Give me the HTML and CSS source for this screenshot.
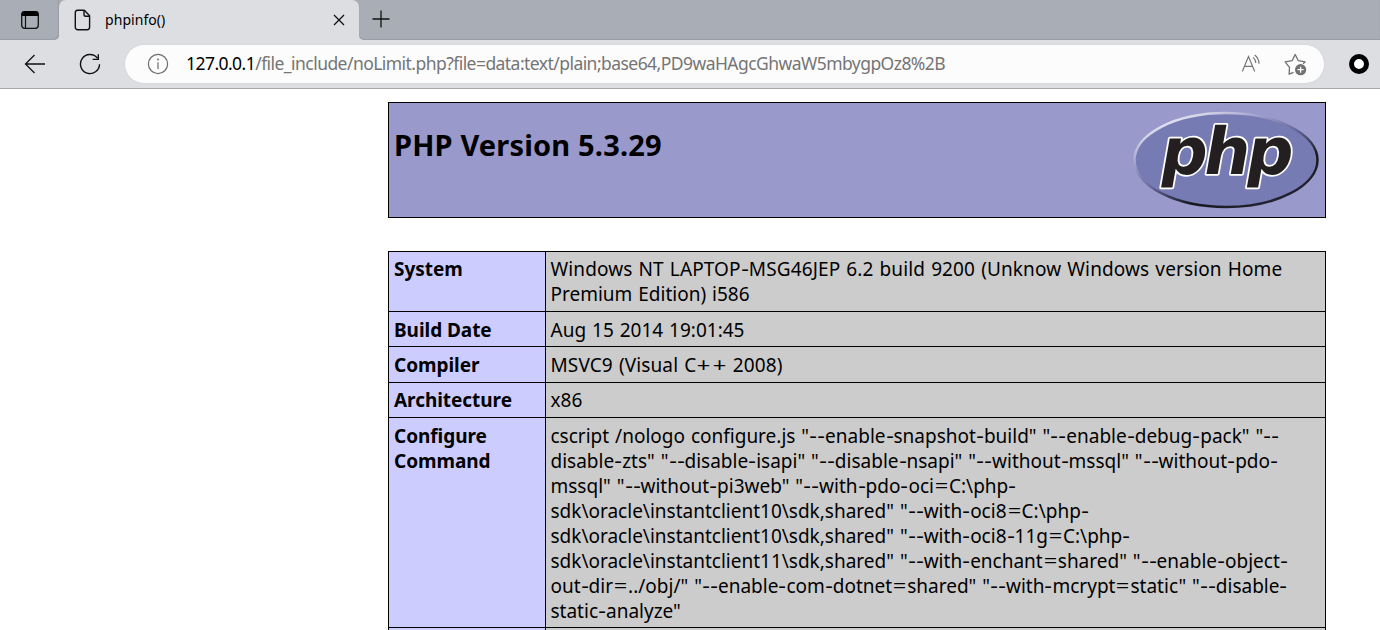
FILE: index.html
```html
<!DOCTYPE html>
<html lang="en">
<head>
<meta charset="utf-8">
<title>phpinfo()</title>
<link rel="stylesheet" href="styles.css">
</head>
<body>
<header class="browser">
  <div class="tabstrip">
    <div class="workspace">
      <svg width="20" height="20" viewBox="0 0 20 20"><rect x="1.7" y="1.7" width="16.6" height="16.6" rx="3" fill="none" stroke="#111" stroke-width="1.3"/><path d="M1.5 6V4a3 3 0 0 1 3-3h11a3 3 0 0 1 3 3v2z" fill="#000"/><path d="M5.5 6v12" stroke="#111" stroke-width="1.2"/></svg>
    </div>
    <div class="tab">
      <svg class="page-icon" width="18" height="22" viewBox="0 0 18 22" fill="none" stroke="#111" stroke-width="1.4" stroke-linejoin="round"><path d="M3.5 1.2h6.800l5.300 5.600v11.500a2.400 2.400 0 0 1-2.400 2.400H3.700a2.400 2.400 0 0 1-2.400-2.400V3.600a2.400 2.400 0 0 1 2.200-2.400z"/><path d="M10 1.400v4a1.800 1.800 0 0 0 1.800 1.800h3.600"/></svg>
      <span class="tab-title">phpinfo()</span>
      <svg class="close" width="12" height="12" viewBox="0 0 12 12" stroke="#111" stroke-width="1.3"><path d="M1 1l10 10M11 1L1 11"/></svg>
    </div>
    <div class="tail">
      <svg width="18" height="18" viewBox="0 0 18 18" stroke="#111" stroke-width="1.3"><path d="M9 .5v17M.5 9h17"/></svg>
    </div>
  </div>
  <div class="toolbar">
    <svg class="back" width="22" height="20" viewBox="0 0 22 20" fill="none" stroke="#111" stroke-width="1.3"><path d="M21 10H1.5M10.5 1L1.500 10l9 9"/></svg>
    <svg class="reload" width="22" height="22" viewBox="0 0 22 22" fill="none" stroke="#111" stroke-width="1.4"><path d="M20.500 11.200A9.500 9.500 0 1 1 18.400 5.100M19.300 1.200v5.200h-5.600"/></svg>
    <div class="address">
      <svg class="info" width="22" height="22" viewBox="0 0 22 22" fill="none" stroke="#6c6c6c" stroke-width="1.2"><circle cx="11" cy="11" r="9.600"/><path d="M11 9.300v6.700"/><circle cx="11" cy="6.600" r="1" fill="#6c6c6c" stroke="none"/></svg>
      <span class="url"><span class="host">127.0.0.1</span>/file_include/noLimit.php?file=data:text/plain;base64,PD9waHAgcGhwaW5mbygpOz8%2B</span>
      <svg class="read" width="22" height="20" viewBox="0 0 22 20" fill="none" stroke="#777" stroke-width="1.2"><path d="M1.300 17.500L7.500 2.500l6.200 15M3.400 12.400h8.200M12 3.400q2.700 2.200 2.800 5.600M13.700 1.100q4.200 3.200 4.300 8.600"/></svg>
      <svg class="star" width="23" height="23" viewBox="0 0 23 23"><path d="M9.500 19.300L5.100 21.200 5.500 14.300 1.100 8.900 8.100 7.700 11.200 1.500 14.300 7.700 21.100 8.900 19 10.700" fill="none" stroke="#707070" stroke-width="1.300" stroke-linejoin="round"/><circle cx="16.600" cy="16.700" r="5.600" fill="#707070"/><path d="M16.600 13.700v6M13.600 16.700h6" stroke="#fff" stroke-width="1.300"/></svg>
    </div>
    <div class="extension"></div>
  </div>
</header>
<main class="page">
  <section class="banner">
    <h1>PHP Version 5.3.29</h1>
    <svg class="logo" width="188" height="100" viewBox="0 0 188 100">
      <defs>
        <linearGradient id="rim" x1="0.2" y1="0" x2="0.85" y2="0.85"><stop offset="0" stop-color="#f2f2fa"/><stop offset=".27" stop-color="#a6a6cf"/><stop offset=".52" stop-color="#68689b"/><stop offset=".78" stop-color="#17171f"/><stop offset="1" stop-color="#222230"/></linearGradient>
      </defs>
      <ellipse cx="94" cy="50" rx="91.500" ry="47" fill="#777bb4" stroke="url(#rim)" stroke-width="2.500"/>
      <text class="logo-text outline" transform="translate(26 64) skewX(-10)">php</text>
      <text class="logo-text" transform="translate(26 64) skewX(-10)">php</text>
    </svg>
  </section>
  <table class="info-table">
    <tr class="system"><th>System</th><td><span class="long">Windows NT LAPTOP<i>-</i>MSG46JEP 6.2 build 9200 (Unknow Windows version Home</span><br>Premium Edition) i586</td></tr>
    <tr><th>Build Date</th><td>Aug 15 2014 19:01:45</td></tr>
    <tr class="tall"><th>Compiler</th><td><span class="long">MSVC9 (Visual C<i class="w">+</i><i class="w">+</i> 2008)</span></td></tr>
    <tr class="arch"><th>Architecture</th><td>x86</td></tr>
    <tr class="command"><th>Configure<br>Command</th><td>cscript /nologo configure.js "<i>-</i><i>-</i>enable<i>-</i>snapshot<i>-</i>build" "<i>-</i><i>-</i>enable<i>-</i>debug<i>-</i>pack" "<i>-</i><i>-</i><br>disable<i>-</i>zts" "<i>-</i><i>-</i>disable<i>-</i>isapi" "<i>-</i><i>-</i>disable<i>-</i>nsapi" "<i>-</i><i>-</i>without<i>-</i>mssql" "<i>-</i><i>-</i>without<i>-</i>pdo<i>-</i><br>mssql" "<i>-</i><i>-</i>without<i>-</i>pi3web" "<i>-</i><i>-</i>with<i>-</i>pdo<i>-</i>oci<i class="w">=</i>C:\php<i>-</i><br>sdk\oracle\instantclient10\sdk,shared" "<i>-</i><i>-</i>with<i>-</i>oci8<i class="w">=</i>C:\php<i>-</i><br>sdk\oracle\instantclient10\sdk,shared" "<i>-</i><i>-</i>with<i>-</i>oci8<i>-</i>11g<i class="w">=</i>C:\php<i>-</i><br>sdk\oracle\instantclient11\sdk,shared" "<i>-</i><i>-</i>with<i>-</i>enchant<i class="w">=</i>shared" "<i>-</i><i>-</i>enable<i>-</i>object<i>-</i><br>out<i>-</i>dir<i class="w">=</i>../obj/" "<i>-</i><i>-</i>enable<i>-</i>com<i>-</i>dotnet<i class="w">=</i>shared" "<i>-</i><i>-</i>with<i>-</i>mcrypt<i class="w">=</i>static" "<i>-</i><i>-</i>disable<i>-</i><br>static<i>-</i>analyze"</td></tr>
    <tr class="cut"><th></th><td></td></tr>
  </table>
</main>
</body>
</html>
```
FILE: styles.css
```css
* { box-sizing: border-box; }
html, body { margin: 0; height: 100%; overflow: hidden; }
body { background: #fff; color: #000; font-family: "Noto Sans", "Open Sans", sans-serif; display: flex; flex-direction: column; }
svg { display: block; flex: none; }
.browser { flex: none; height: 89px; background: #dddee1; border-bottom: 1px solid #a5a7aa; }
.tabstrip { height: 40px; display: flex; background: linear-gradient(#dddee1, #dddee1) 50px 10px / 320px 30px no-repeat #a9adb5; }
.workspace { width: 59px; padding: 10px 0 0 20px; background: #a9adb5; border-radius: 0 0 5px 0; box-shadow: inset -1px -1px 1px #989ca4; }
.tab { width: 300px; display: flex; align-items: center; padding: 0 14px 0 15px; background: #dddee1; border-radius: 7px 7px 0 0; }
.tab-title { margin: -2px 0 0 13px; flex: 1; font-size: 14px; letter-spacing: .06px; }
.tail { flex: 1; padding: 10px 0 0 13px; background: #a9adb5; border-radius: 0 0 0 5px; box-shadow: inset 0 -1px 1px #989ca4; }
.toolbar { height: 48px; display: flex; align-items: center; }
.back { margin-left: 24px; }
.reload { margin-left: 33px; }
.address { width: 1199px; height: 38px; margin-left: 24px; padding-left: 22px; display: flex; align-items: center; background: #fcfcfc; border-radius: 19px; box-shadow: 0 0 2px #cfd0d3; }
.url { margin: -2px 0 0 17px; width: 1055px; font-size: 17.5px; line-height: 24px; letter-spacing: -.55px; color: #757575; white-space: nowrap; }
.host { color: #000; }
.star { margin-left: 21px; }
.extension { width: 20px; height: 20px; margin-left: 25px; border: 5.500px solid #000; border-radius: 50%; background: #fff; }
.page { flex: 1; min-height: 0; overflow: hidden; width: 938px; padding-top: 13px; margin-left: 388px; }
.banner { height: 116px; display: flex; justify-content: space-between; background: #9999cc; border: 1px solid #000; padding: 0 5px; }
h1 { margin: 21px 0 0; font-size: 29px; line-height: 42px; font-weight: 700; letter-spacing: .17px; white-space: nowrap; }
.logo { margin: 7px 0 0; }
.logo-text { font-family: "DejaVu Sans", sans-serif; font-size: 65px; font-weight: 700; letter-spacing: -3.500px; fill: #231f20; }
.outline { stroke: #fff; stroke-width: 3.500px; stroke-linejoin: round; }
.info-table { width: 938px; margin-top: 33px; border-collapse: collapse; table-layout: fixed; font-size: 19px; line-height: 25px; }
tr { height: 35px; }
.system { height: 60px; }
.tall { height: 36px; }
.command { height: 210px; }
.cut { height: 10px; }
th, td { border: 1px solid #000; padding: 6px 5px 2px; vertical-align: top; text-align: left; white-space: nowrap; }
td { padding-left: 4.500px; background: #cccccc; word-spacing: 1px; }
th { width: 157px; background: #ccccff; font-weight: 700; letter-spacing: -.05px; }
.system th, .system td, .arch th, .arch td { padding-top: 5px; padding-bottom: 3px; }
.cut th, .cut td { padding: 0; }
.long { letter-spacing: .12px; }
i { display: inline-block; font-style: normal; padding: 0 .95px; transform: scaleX(1.25); }
.w { padding: 0 2.1px; }
```
